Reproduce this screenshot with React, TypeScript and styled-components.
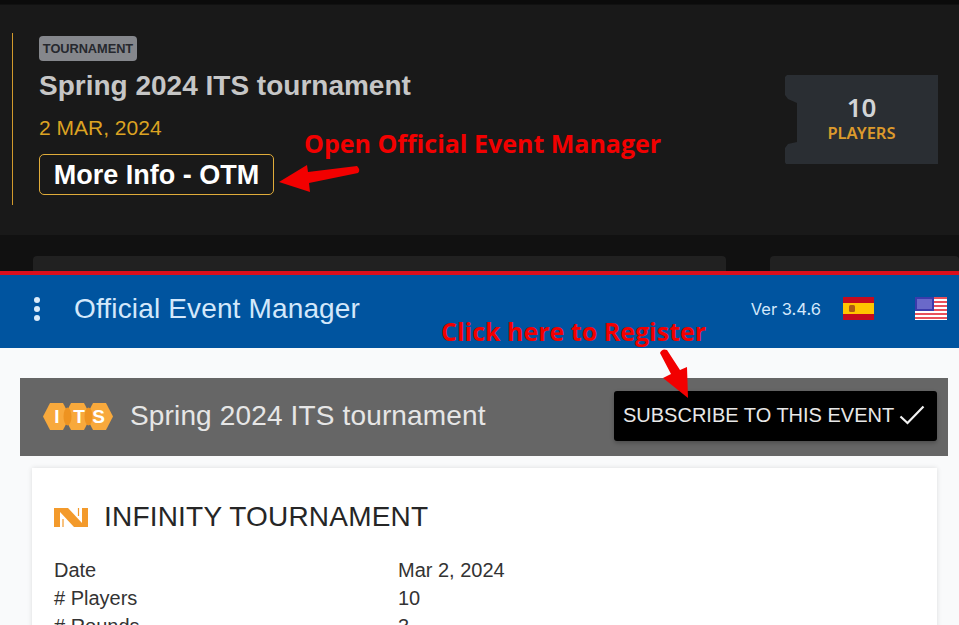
import React from "react";
import styled, { createGlobalStyle } from "styled-components";

const Global = createGlobalStyle`
  html, body { margin: 0; padding: 0; background: #f9fafb; }
  body { font-family: "Liberation Sans", Arial, sans-serif; overflow: hidden; }
  * { box-sizing: border-box; }
`;

const Page = styled.div`
  position: relative;
  width: 959px;
  height: 625px;
  overflow: hidden;
`;

/* ---------- top capture: dark event card ---------- */
const DarkSection = styled.section`
  height: 271px;
  background: #111111;
  border-top: 4px solid #0b0b0b;
  padding-top: 1px;
  display: flex;
  flex-direction: column;
  overflow: hidden;
`;

const EventCard = styled.article`
  height: 230px;
  flex: none;
  background: #191919;
  padding: 28px 21px 30px 12px;
  display: flex;
  align-items: center;
  justify-content: space-between;
`;

const EventInfo = styled.div`
  height: 172px;
  border-left: 1px solid #d29a2c;
  padding: 3px 0 0 26px;
  display: flex;
  flex-direction: column;
  align-items: flex-start;
`;

const Badge = styled.span`
  width: 98px;
  height: 25px;
  border-radius: 4px;
  background: #85878c;
  color: #26282e;
  font-size: 12.8px;
  font-weight: 700;
  letter-spacing: -0.05px;
  display: flex;
  align-items: center;
  justify-content: center;
`;

const EventTitle = styled.h2`
  margin: 9px 0 0;
  font-size: 28px;
  line-height: 32px;
  font-weight: 700;
  color: #c6c6c6;
`;

const EventDate = styled.div`
  margin-top: 14px;
  font-size: 21px;
  line-height: 24px;
  color: #dca322;
`;

const MoreButton = styled.button`
  margin-top: 14px;
  width: 235px;
  height: 41px;
  padding: 2px 0 0;
  background: transparent;
  border: 1px solid #e0ac3a;
  border-radius: 5px;
  color: #ffffff;
  font-family: inherit;
  font-size: 27px;
  font-weight: 700;
`;

const Ticket = styled.div`
  width: 153px;
  height: 89px;
  margin-top: 1px;
  background: #2a2e33;
  clip-path: polygon(
    2px 0, 100% 0, 100% 100%, 1px 100%, 0 98%, 0 73px, 3px 69px, 12px 67px,
    12px 28px, 3px 24px, 0 20px, 0 2px
  );
  display: flex;
  flex-direction: column;
  align-items: center;
  justify-content: center;
`;

const TicketCount = styled.div`
  font-family: "Noto Sans", sans-serif;
  font-size: 26px;
  line-height: 30px;
  font-weight: 600;
  color: #d2d4d6;
  margin-top: -3px;
`;

const TicketLabel = styled.div`
  font-family: "Noto Sans", sans-serif;
  font-size: 16.5px;
  line-height: 22px;
  font-weight: 600;
  color: #dc9a2c;
`;

const StubRow = styled.div`
  margin-top: 21px;
  padding-left: 33px;
  display: flex;
  gap: 44px;
`;

const Stub = styled.div<{ $width: number }>`
  width: ${(p) => p.$width}px;
  height: 20px;
  background: #212121;
  border-radius: 4px 4px 0 0;
`;

/* ---------- bottom capture: Official Event Manager ---------- */
const AppBar = styled.header`
  height: 77px;
  border-top: 4px solid #dc0f1c;
  background: #00549f;
  display: flex;
  align-items: center;
  padding: 0 12px 6px 34px;
  color: #d3e8fb;
`;

const Dots = styled.span`
  width: 7px;
  display: flex;
  flex-direction: column;
  gap: 3px;
  margin-right: 33px;
`;

const Dot = styled.i`
  width: 6px;
  height: 6px;
  border-radius: 50%;
  background: #dcecfa;
`;

const AppTitle = styled.h1`
  margin: 0;
  flex: 1;
  font-size: 28px;
  line-height: 32px;
  font-weight: 400;
  letter-spacing: 0.15px;
`;

const Version = styled.span`
  font-family: "Inter", sans-serif;
  font-size: 16.5px;
  margin-right: 22px;
`;

const FlagGap = styled.span`
  width: 41px;
`;

const Content = styled.main`
  padding: 30px 11px 0 20px;
  background: #f9fafb;
`;

const EventBar = styled.div`
  height: 78px;
  background: #666666;
  display: flex;
  align-items: center;
  padding: 0 11px 2px 23px;
`;

const EventBarTitle = styled.h2`
  margin: 0 0 0 17px;
  flex: 1;
  font-size: 28px;
  font-weight: 400;
  color: #e6e6e6;
  letter-spacing: 0.15px;
`;

const SubscribeButton = styled.button`
  width: 323px;
  height: 50px;
  border: 0;
  border-radius: 3px;
  background: #000000;
  color: #e8e8e8;
  font-family: inherit;
  font-size: 20px;
  display: flex;
  align-items: center;
  gap: 5px;
  padding: 0 0 2px 9px;
  white-space: nowrap;
  box-shadow: 0 2px 4px rgba(0, 0, 0, 0.25);
`;

const InfoCard = styled.section`
  margin: 12px 11px 0 12px;
  background: #ffffff;
  box-shadow: 0 0 5px rgba(0, 0, 0, 0.12);
  padding: 34px 22px 20px;
  height: 260px;
`;

const InfoHeading = styled.div`
  display: flex;
  align-items: center;
  gap: 16px;
  height: 30px;
`;

const InfoTitle = styled.h3`
  margin: 0;
  font-size: 28px;
  font-weight: 400;
  color: #262626;
  letter-spacing: 0.2px;
`;

const InfoGrid = styled.dl`
  margin: 24px 0 0;
  display: grid;
  grid-template-columns: 344px 1fr;
  grid-auto-rows: 28px;
  font-size: 20px;
  line-height: 28px;
  color: #333333;
`;

const InfoTerm = styled.dt`
  margin: 0;
`;

const InfoValue = styled.dd`
  margin: 0;
`;

/* ---------- red annotations over both captures ---------- */
const Note = styled.div<{ $left: number; $top: number }>`
  position: absolute;
  left: ${(p) => p.$left}px;
  top: ${(p) => p.$top}px;
  font-family: "Open Sans", sans-serif;
  font-size: 25px;
  line-height: 30px;
  font-weight: 700;
  color: #f20000;
  white-space: nowrap;
`;

const Overlay = styled.svg`
  position: absolute;
  left: 0;
  top: 0;
  pointer-events: none;
`;

const SpainFlag = () => (
  <svg width="31" height="23" viewBox="0 0 31 23">
    <rect width="31" height="23" fill="#c60b1e" />
    <rect y="6" width="31" height="11" fill="#ffc400" />
    <rect x="6" y="8" width="6" height="7" rx="1.5" fill="#ad5a14" />
  </svg>
);

const UsFlag = () => (
  <svg width="32" height="23" viewBox="0 0 32 23">
    <rect width="32" height="23" fill="#fff" />
    {[0, 4, 8, 12, 16, 20].map((y) => (
      <rect key={y} y={y} width="32" height="2" fill="#e8505b" />
    ))}
    <rect width="19" height="14" fill="#3c3bab" />
    <rect x="2" y="2" width="15" height="10" fill="#7d7dd6" opacity="0.7" />
  </svg>
);

const Check = () => (
  <svg width="26" height="20" viewBox="0 0 26 20" fill="none">
    <path d="M1.5 11.5 L8.5 18 L24.5 1.5" stroke="#f2f2f2" strokeWidth="2.2" />
  </svg>
);

const ItsLogo = () => (
  <svg width="70" height="27" viewBox="0 0 70 27">
    <path d="M7 0H20L27 13.5L20 27H7L0 13.5Z" fill="#f8a93c" />
    <path d="M28 0H41L48 13.5L41 27H28L21 13.5Z" fill="#f8a93c" />
    <path d="M50 0H63L70 13.5L63 27H50L43 13.5Z" fill="#f8a93c" />
    <ellipse cx="24.5" cy="13.5" rx="4" ry="9" fill="#ee9320" />
    <ellipse cx="45.5" cy="13.5" rx="4" ry="9" fill="#ee9320" />
    <g fill="#fff" fontFamily="Liberation Sans, sans-serif" fontWeight="700" fontSize="19" textAnchor="middle">
      <text x="14" y="20">I</text>
      <text x="36" y="20">T</text>
      <text x="55.5" y="20">S</text>
    </g>
  </svg>
);

const TournamentIcon = () => (
  <svg width="34" height="19" viewBox="0 0 34 19">
    <path d="M0 0H6V19H0Z" fill="#f39a2b" />
    <path d="M6 0H14L28 15V19H20L6 4Z" fill="#f39a2b" />
    <path d="M28 0H34V19H28Z" fill="#f39a2b" />
    <path d="M9 11V19M24.5 0V8" stroke="#f39a2b" strokeWidth="1.2" />
  </svg>
);

export default function App() {
  return (
    <Page>
      <Global />
      <DarkSection>
        <EventCard>
          <EventInfo>
            <Badge>TOURNAMENT</Badge>
            <EventTitle>Spring 2024 ITS tournament</EventTitle>
            <EventDate>2 MAR, 2024</EventDate>
            <MoreButton>More Info - OTM</MoreButton>
          </EventInfo>
          <Ticket>
            <TicketCount>10</TicketCount>
            <TicketLabel>PLAYERS</TicketLabel>
          </Ticket>
        </EventCard>
        <StubRow>
          <Stub $width={693} />
          <Stub $width={189} />
        </StubRow>
      </DarkSection>

      <AppBar>
        <Dots>
          <Dot />
          <Dot />
          <Dot />
        </Dots>
        <AppTitle>Official Event Manager</AppTitle>
        <Version>Ver 3.4.6</Version>
        <SpainFlag />
        <FlagGap />
        <UsFlag />
      </AppBar>

      <Content>
        <EventBar>
          <ItsLogo />
          <EventBarTitle>Spring 2024 ITS tournament</EventBarTitle>
          <SubscribeButton>
            SUBSCRIBE TO THIS EVENT
            <Check />
          </SubscribeButton>
        </EventBar>
        <InfoCard>
          <InfoHeading>
            <TournamentIcon />
            <InfoTitle>INFINITY TOURNAMENT</InfoTitle>
          </InfoHeading>
          <InfoGrid>
            <InfoTerm>Date</InfoTerm>
            <InfoValue>Mar 2, 2024</InfoValue>
            <InfoTerm># Players</InfoTerm>
            <InfoValue>10</InfoValue>
            <InfoTerm># Rounds</InfoTerm>
            <InfoValue>3</InfoValue>
          </InfoGrid>
        </InfoCard>
      </Content>

      <Note $left={304} $top={128}>Open Official Event Manager</Note>
      <Note $left={441} $top={316}>Click here to Register</Note>
      <Overlay width="959" height="625" viewBox="0 0 959 625">
        <path
          d="M279 182 L307 165 L308 172 L357 166 Q361 170 358 173 L309 183 L310 192 Z"
          fill="#f20000"
        />
        <path
          d="M688 398 L663 378 L671 374 L660 353 Q662 348 667 350 L680 370 L687 367 Z"
          fill="#f20000"
        />
      </Overlay>
    </Page>
  );
}
